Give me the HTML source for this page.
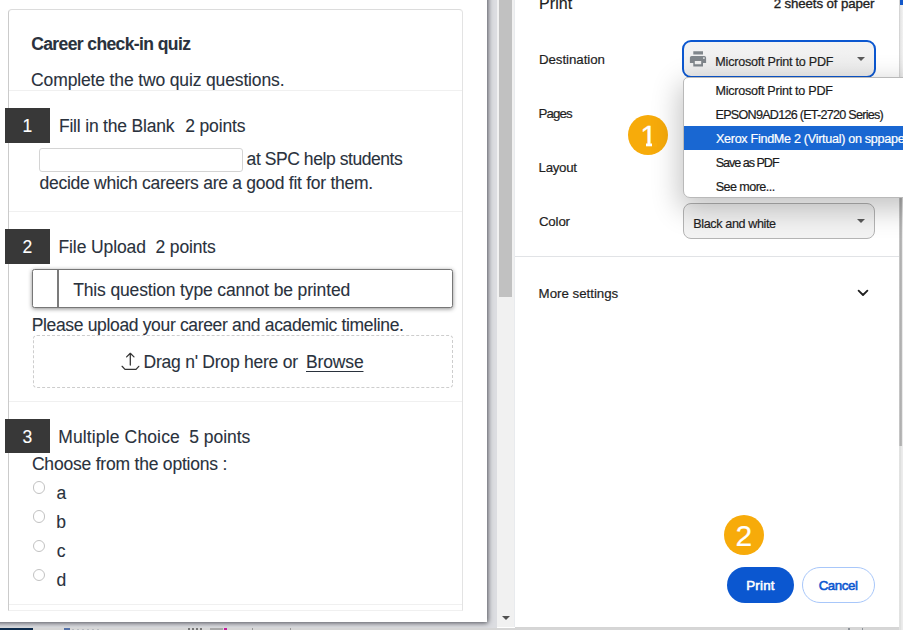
<!DOCTYPE html>
<html lang="en">
<head>
<meta charset="utf-8">
<title>Print</title>
<style>
html,body{margin:0;padding:0;}
body{width:903px;height:630px;overflow:hidden;position:relative;background:#e2e2e2;font-family:"Liberation Sans",sans-serif;}
.abs{position:absolute;}
.t{position:absolute;white-space:pre;line-height:normal;font-family:"Liberation Sans",sans-serif;-webkit-text-stroke-width:0.1px;}
.u{-webkit-text-stroke-width:0.2px;}
#dialog{left:0;top:0;width:899.2px;height:628px;background:#fff;overflow:hidden;}
#rp{left:515px;top:0;width:384.2px;height:627.3px;background:#fff;}
#rpb{left:515px;top:627.3px;width:384.2px;height:2px;background:linear-gradient(#d2d2d2,#dedede);}
#preview{left:0;top:0;width:497px;height:628px;background:#dcdde1;overflow:hidden;}
#page{left:-10px;top:-10px;width:497px;height:632px;background:#fff;box-shadow:0 0 5px 1px rgba(40,42,50,.8);}
#sbar{left:497px;top:0;width:18px;height:627px;background:#f1f1f1;border-right:1px solid #e9ebee;box-sizing:border-box;}
#thumb{left:499px;top:0;width:13px;height:296.8px;background:#c1c1c1;}
#sarrow{left:501.6px;top:616px;width:0;height:0;border-left:4px solid transparent;border-right:4px solid transparent;border-top:4.2px solid #505050;}
#card{left:7.7px;top:9.1px;width:455.2px;height:601.9px;border:1.3px solid #cbcbcb;border-top-color:#dcdcdc;border-right:1.6px solid #e3e3e3;border-bottom:1px solid #f0f0f0;border-radius:4px 4px 0 0;box-sizing:border-box;}
.hr{left:9px;width:452.5px;height:1px;background:#f0f0f0;}
.num{left:5px;width:45px;height:34.6px;background:#383838;}
#inp{left:39.4px;top:148px;width:204px;height:23.5px;border:1px solid #d4d4d4;border-radius:3px;box-sizing:border-box;background:#fff;}
#noprint{left:32px;top:269.3px;width:420.9px;height:38.3px;border:1px solid #777;border-radius:2.5px;box-sizing:border-box;background:#fff;box-shadow:0 1px 4px rgba(0,0,0,.45);}
#noprint i{position:absolute;left:24.1px;top:0;width:1.8px;height:100%;background:#7b7b7b;}
#drop{left:32.5px;top:335px;width:420.5px;height:52.5px;border:1px dashed #cdcdcd;border-radius:4px;box-sizing:border-box;}
.radio{left:32.5px;width:12.8px;height:12.8px;border:1.2px solid #c2c2c2;border-radius:50%;box-sizing:border-box;background:#fff;}
/* right panel */
#sel1{left:682.2px;top:40px;width:193.7px;height:37.6px;border:2px solid #0b57d0;border-radius:9px;box-sizing:border-box;background:linear-gradient(#f3f3f3,#ededed);}
#sel2{left:683.2px;top:203.2px;width:191.8px;height:35.6px;border:1px solid #b4b4b4;border-radius:8px;box-sizing:border-box;background:#f3f3f3;}
.tri{width:0;height:0;border-left:4.3px solid transparent;border-right:4.3px solid transparent;border-top:4.3px solid #5a5a5a;}
#divider{left:515px;top:256px;width:384px;height:1px;background:#e1e3e6;}
#popup{left:682.8px;top:77.3px;width:240px;height:120.5px;background:#fff;border:1px solid #b9b9b9;border-radius:5px 0 0 7px;box-sizing:border-box;box-shadow:-1px 9px 28px 3px rgba(0,0,0,.23);}
#hl{left:683.8px;top:126.1px;width:220px;height:23.6px;background:#1967d2;}
.circ{width:40.4px;height:40.4px;border-radius:50%;background:#f7ab0a;}
#bprint{left:727px;top:567px;width:67px;height:36px;border-radius:18px;background:#0b57d0;}
#bcancel{left:802.3px;top:567px;width:72.7px;height:36px;border-radius:18px;border:1px solid #a8c7fa;box-sizing:border-box;background:#fff;}
</style>
</head>
<body>
<div id="dialog" class="abs">
  <div id="preview" class="abs">
    <div id="page" class="abs" style="left:-10px;top:-10px;"></div>
  </div>
  <div id="sbar" class="abs"></div>
  <div id="thumb" class="abs"></div>
  <div id="sarrow" class="abs"></div>
  <div id="rp" class="abs"></div><div id="rpb" class="abs"></div>

  <div id="card" class="abs"></div>
  <div class="abs hr" style="top:90px"></div>
  <div class="abs hr" style="top:211px"></div>
  <div class="abs hr" style="top:401px"></div>
  <div class="abs hr" style="top:604px"></div>

  <div class="abs num" style="top:108px"></div>
  <div class="abs num" style="top:229px"></div>
  <div class="abs num" style="top:418.9px"></div>

  <div id="inp" class="abs"></div>
  <div id="noprint" class="abs"><i></i></div>
  <div id="drop" class="abs"></div>
  <svg class="abs" style="left:120px;top:351px" width="21" height="21" viewBox="0 0 21 21" fill="none" stroke="#333" stroke-width="1.25" stroke-linecap="round" stroke-linejoin="round">
    <path d="M10.3 2.400V14M6.600 5.900L10.3 2.300L14 5.900M2.100 15.300L5 18.400H16L18.800 15.300"/>
  </svg>

  <div class="abs radio" style="top:481.2px"></div>
  <div class="abs radio" style="top:510.4px"></div>
  <div class="abs radio" style="top:539.7px"></div>
  <div class="abs radio" style="top:568.6px"></div>

  <div id="divider" class="abs"></div>
  <div id="sel1" class="abs"></div>
  <svg class="abs" style="left:689px;top:50px" width="18" height="18" viewBox="0 0 18 18">
    <path fill="#80868b" fill-rule="evenodd" d="M4.300 1.200h9.700v3.300H4.300z M2.700 5.900h12.600a1.800 1.800 0 0 1 1.800 1.800v5.300H14v3.500H4.300V13H0.900V7.700a1.800 1.800 0 0 1 1.800-1.800z M5.800 11v3.300h6.400V11z M14.900 7.200a0.800 0.800 0 1 0 0.010 0z"/>
  </svg>
  <div class="abs tri" style="left:857px;top:56.6px"></div>
  <div id="sel2" class="abs"></div>
  <div class="abs tri" style="left:857px;top:218.6px"></div>
  <svg class="abs" style="left:856px;top:287px" width="14" height="12" viewBox="0 0 14 12" fill="none" stroke="#1f1f1f" stroke-width="1.8" stroke-linecap="round" stroke-linejoin="round"><path d="M2.600 3.600L7 8L11.400 3.600"/></svg>

  <div id="bprint" class="abs"></div>
  <div id="bcancel" class="abs"></div>
  <div class="abs circ" style="left:627.8px;top:114.8px"></div>
  <div class="abs circ" style="left:723.600px;top:514.6px"></div>
</div>
<div class="abs" style="left:0;top:628px;width:903px;height:2px;background:#d6d6d6"></div>
<div class="abs" style="left:0;top:628px;width:33px;height:2px;background:#0d2c4d"></div>
<div class="abs" style="left:899px;top:0;width:4px;height:200px;background:linear-gradient(90deg,#cbcbcb 0,#e4e4e4 1.3px,#f2f2f2 100%)"></div>
<div class="abs" style="left:899px;top:198px;width:4px;height:248px;background:linear-gradient(90deg,#d6d6d6 0,#b0b0b0 1.1px,#b0b0b0 2.400px,#e4e4e4 3.1px,#f2f2f2 100%)"></div>
<div class="abs" style="left:899px;top:446px;width:4px;height:184px;background:linear-gradient(90deg,#e6e6e6 0,#dfe0df 0.8px,#dfe0df 2.200px,#ececec 2.600px)"></div>
<div class="abs" style="left:900px;top:0;width:3px;height:4.500px;background:#1257c9"></div>
<div class="abs" style="left:847.5px;top:627.6px;width:2px;height:2.400px;background:#8d9299"></div>
<div class="abs" style="left:862px;top:627.6px;width:1.2px;height:2.400px;background:#8d9299"></div>
<div class="abs" style="left:64px;top:628.3px;width:6px;height:1.700px;background:#5572a8"></div>
<div class="abs" style="left:72px;top:628.8px;width:30px;height:1.200px;background:repeating-linear-gradient(90deg,#b9bcc2 0 2px,#d9d9d9 2px 5px)"></div>
<div class="abs" style="left:188px;top:628.3px;width:15px;height:1.700px;background:repeating-linear-gradient(90deg,#777 0 2px,#d6d6d6 2px 4px)"></div>
<div class="abs" style="left:210px;top:628.3px;width:13px;height:1.700px;background:#a9a9a9"></div>
<div class="abs" style="left:224px;top:628.3px;width:3px;height:1.700px;background:#c21f9b"></div>
<div class="abs" style="left:252px;top:628.3px;width:1px;height:1.700px;background:#9a9a9a"></div>
<div class="abs" style="left:290px;top:628.3px;width:1px;height:1.700px;background:#9a9a9a"></div>
<div id="popup" class="abs"></div>
<div id="hl" class="abs"></div>
<main aria-label="Print preview">
<header>
<span class="t" id="t1" style="left:31.14px;top:34.00px;font-size:17.5px;font-weight:bold;color:#2a323d;letter-spacing:-0.600px;">Career check-in quiz</span>
<span class="t" id="t2" style="left:31.12px;top:70.00px;font-size:17.5px;font-weight:normal;color:#2a323d;letter-spacing:-0.141px;">Complete the two quiz questions.</span>
</header>
<section aria-label="Question 1">
<span class="t" id="n1" style="left:22.43px;top:116.00px;font-size:17.5px;font-weight:normal;color:#ffffff;letter-spacing:0.000px;">1</span>
<span class="t" id="q1a" style="left:58.91px;top:116.00px;font-size:17.5px;font-weight:normal;color:#2a323d;letter-spacing:-0.186px;">Fill in the Blank</span>
<span class="t" id="q1b" style="left:185.22px;top:116.00px;font-size:17.5px;font-weight:normal;color:#2a323d;letter-spacing:-0.149px;">2 points</span>
<span class="t" id="q1c" style="left:246.59px;top:149.00px;font-size:17.5px;font-weight:normal;color:#2a323d;letter-spacing:-0.431px;">at SPC help students</span>
<span class="t" id="q1d" style="left:39.48px;top:173.00px;font-size:17.5px;font-weight:normal;color:#2a323d;letter-spacing:-0.263px;">decide which careers are a good fit for them.</span>
</section>
<section aria-label="Question 2">
<span class="t" id="n2" style="left:22.43px;top:237.00px;font-size:17.5px;font-weight:normal;color:#ffffff;letter-spacing:0.000px;">2</span>
<span class="t" id="q2a" style="left:58.50px;top:237.00px;font-size:17.5px;font-weight:normal;color:#2a323d;letter-spacing:-0.110px;">File Upload</span>
<span class="t" id="q2b" style="left:155.62px;top:237.00px;font-size:17.5px;font-weight:normal;color:#2a323d;letter-spacing:-0.175px;">2 points</span>
<span class="t" id="q2c" style="left:73.20px;top:280.00px;font-size:17.5px;font-weight:normal;color:#2a323d;letter-spacing:-0.146px;">This question type cannot be printed</span>
<span class="t" id="q2d" style="left:31.67px;top:315.00px;font-size:17.5px;font-weight:normal;color:#2a323d;letter-spacing:-0.338px;">Please upload your career and academic timeline.</span>
<span class="t" id="q2e" style="left:143.51px;top:352.00px;font-size:17.5px;font-weight:normal;color:#2a323d;letter-spacing:-0.232px;">Drag n' Drop here or</span>
<span class="t" id="q2f" style="left:306.00px;top:352.00px;font-size:17.5px;font-weight:normal;color:#2a323d;letter-spacing:-0.145px;text-decoration:underline;text-underline-offset:3px;text-decoration-thickness:1.2px;">Browse</span>
</section>
<section aria-label="Question 3">
<span class="t" id="n3" style="left:22.43px;top:427.00px;font-size:17.5px;font-weight:normal;color:#ffffff;letter-spacing:0.000px;">3</span>
<span class="t" id="q3a" style="left:58.26px;top:427.00px;font-size:17.5px;font-weight:normal;color:#2a323d;letter-spacing:0.134px;">Multiple Choice</span>
<span class="t" id="q3b" style="left:189.18px;top:427.00px;font-size:17.5px;font-weight:normal;color:#2a323d;letter-spacing:-0.019px;">5 points</span>
<span class="t" id="q3c" style="left:31.94px;top:454.00px;font-size:17.5px;font-weight:normal;color:#2a323d;letter-spacing:-0.207px;">Choose from the options :</span>
<span class="t" id="oa" style="left:56.59px;top:483.00px;font-size:17.5px;font-weight:normal;color:#2a323d;letter-spacing:-1.634px;">a</span>
<span class="t" id="ob" style="left:56.33px;top:512.00px;font-size:17.5px;font-weight:normal;color:#2a323d;letter-spacing:-0.734px;">b</span>
<span class="t" id="oc" style="left:56.64px;top:541.00px;font-size:17.5px;font-weight:normal;color:#2a323d;letter-spacing:-1.250px;">c</span>
<span class="t" id="od" style="left:56.48px;top:570.00px;font-size:17.5px;font-weight:normal;color:#2a323d;letter-spacing:-0.734px;">d</span>
</section>
</main>
<aside aria-label="Print settings">
<span class="t u" id="p1" style="left:539.11px;top:-5.00px;font-size:16px;font-weight:normal;color:#1f1f1f;letter-spacing:0.017px;">Print</span>
<span class="t u" id="p2" style="left:773.64px;top:-4.00px;font-size:13.3px;font-weight:normal;color:#1f1f1f;letter-spacing:-0.119px;-webkit-text-stroke-width:0.35px;">2 sheets of paper</span>
<span class="t u" id="l1" style="left:538.99px;top:52.00px;font-size:13.3px;font-weight:normal;color:#1f1f1f;letter-spacing:-0.054px;">Destination</span>
<span class="t u" id="s1" style="left:715.35px;top:55.00px;font-size:12.6px;font-weight:normal;color:#1f1f1f;letter-spacing:-0.239px;">Microsoft Print to PDF</span>
<span class="t u" id="l2" style="left:538.62px;top:106.00px;font-size:13.3px;font-weight:normal;color:#1f1f1f;letter-spacing:-0.890px;">Pages</span>
<span class="t u" id="l3" style="left:538.62px;top:160.00px;font-size:13.3px;font-weight:normal;color:#1f1f1f;letter-spacing:-0.309px;">Layout</span>
<span class="t u" id="l4" style="left:538.93px;top:214.00px;font-size:13.3px;font-weight:normal;color:#1f1f1f;letter-spacing:-0.166px;">Color</span>
<span class="t u" id="s2" style="left:693.35px;top:217.00px;font-size:12.6px;font-weight:normal;color:#1f1f1f;letter-spacing:-0.392px;">Black and white</span>
<span class="t u" id="l5" style="left:538.62px;top:286.00px;font-size:13.3px;font-weight:normal;color:#1f1f1f;letter-spacing:-0.016px;">More settings</span>
<div role="listbox" aria-label="Destination options">
<span class="t u" id="d1" style="left:715.55px;top:84.00px;font-size:12.6px;font-weight:normal;color:#1b1b1b;letter-spacing:-0.276px;">Microsoft Print to PDF</span>
<span class="t u" id="d2" style="left:715.55px;top:108.00px;font-size:12.6px;font-weight:normal;color:#1b1b1b;letter-spacing:-0.746px;">EPSON9AD126 (ET-2720 Series)</span>
<span class="t u" id="d3" style="left:715.94px;top:132.00px;font-size:12.6px;font-weight:normal;color:#ffffff;letter-spacing:-0.298px;">Xerox FindMe 2 (Virtual) on sppape</span>
<span class="t u" id="d4" style="left:715.66px;top:156.00px;font-size:12.6px;font-weight:normal;color:#1b1b1b;letter-spacing:-1.025px;">Save as PDF</span>
<span class="t u" id="d5" style="left:715.66px;top:180.00px;font-size:12.6px;font-weight:normal;color:#1b1b1b;letter-spacing:-0.559px;">See more...</span>
</div>
<footer>
<span class="t" id="b1" style="left:746.14px;top:578.00px;font-size:13.3px;font-weight:normal;color:#ffffff;letter-spacing:0.252px;-webkit-text-stroke:0.55px #fff;">Print</span>
<span class="t" id="b2" style="left:818.65px;top:578.00px;font-size:13.3px;font-weight:normal;color:#0b57d0;letter-spacing:-0.429px;-webkit-text-stroke:0.55px #0b57d0;">Cancel</span>
</footer>
<div aria-label="Step markers">
<span class="t" id="c1" style="left:640.16px;top:119.00px;font-size:30px;font-weight:normal;color:#ffffff;letter-spacing:0.000px;-webkit-text-stroke:0.3px #fff;">1</span>
<span class="t" id="c2" style="left:735.46px;top:519.00px;font-size:30px;font-weight:normal;color:#ffffff;letter-spacing:0.000px;-webkit-text-stroke:0.2px #fff;">2</span>
</div>
</aside>
<div class="abs" style="left:639.5px;top:142.500px;width:6.900px;height:4.500px;background:#f7ab0a"></div><div class="abs" style="left:652.200px;top:142.500px;width:5px;height:4.500px;background:#f7ab0a"></div>
</body>
</html>
